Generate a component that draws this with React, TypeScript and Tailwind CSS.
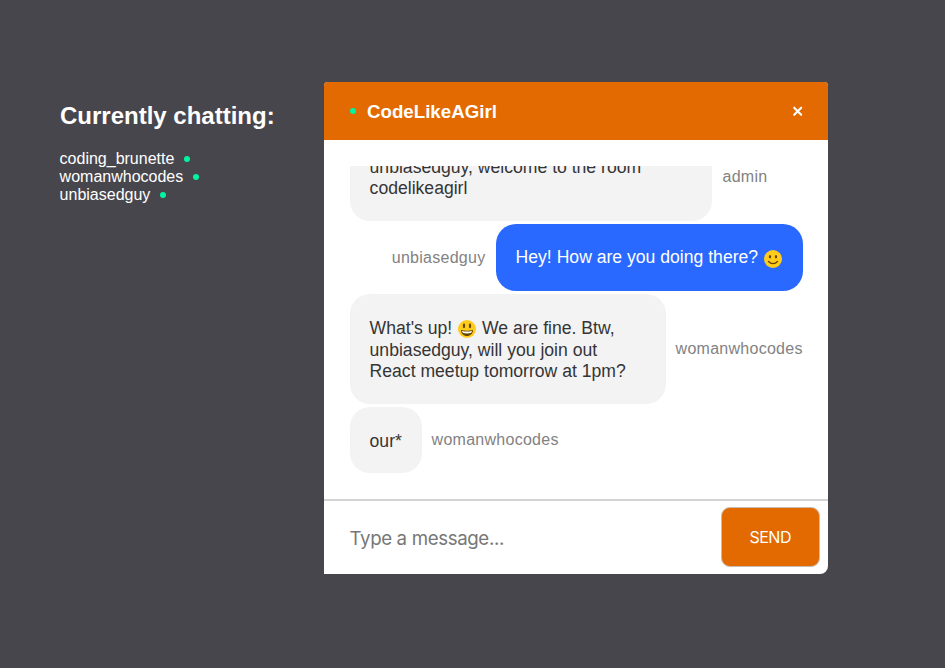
import type { ReactNode } from "react";

function Dot() {
  return <span className="block h-1.5 w-1.5 shrink-0 rounded-full bg-[#00f5a0]" />;
}

function Emoji({ open = false }: { open?: boolean }) {
  return (
    <svg
      className={`ml-px inline-block h-[18px] w-[18px] ${open ? "align-[-4px]" : "align-[-5px]"}`}
      viewBox="0 0 36 36"
    >
      <circle cx="18" cy="18" r="18" fill="#ffcc1b" />
      <ellipse cx="12" cy={open ? 11.5 : 13.5} rx="2.3" ry={open ? 5 : 3.6} fill="#664500" />
      <ellipse cx="24" cy={open ? 11.5 : 13.5} rx="2.3" ry={open ? 5 : 3.6} fill="#664500" />
      {open ? (
        <>
          <path d="M6 20C14 22 22 22 30 20C30 27 25 32 18 32S6 27 6 20Z" fill="#664500" />
          <path d="M8 22C15 23.5 21 23.5 28 22C28 25.5 24 27 18 27S8 25.5 8 22Z" fill="#fff" />
        </>
      ) : (
        <path d="M9 23C14 28.5 22 28.5 27 23" fill="none" stroke="#664500" strokeWidth="2.6" strokeLinecap="round" />
      )}
    </svg>
  );
}

function Sender({ children }: { children: ReactNode }) {
  return <span className="text-[16px] leading-[18px] tracking-[0.27px] text-[#828282]">{children}</span>;
}

const bubble = "shrink-0 whitespace-nowrap rounded-[20px] pl-[19.6px] text-[17.6px]";

export default function App() {
  return (
    <div className="flex h-[668px] w-[945px] items-start overflow-hidden bg-[#48464d] font-['Liberation_Sans',Arial,sans-serif]">
      <aside className="ml-[59.6px] mt-[102px] w-[264.4px] shrink-0 text-white">
        <h2 className="ml-[0.4px] whitespace-nowrap text-[24px] font-bold leading-[28px]">Currently chatting:</h2>
        <ul className="mt-[20px] text-[16px] leading-[18px]">
          {["coding_brunette", "womanwhocodes", "unbiasedguy"].map((name) => (
            <li key={name} className="flex items-center gap-[9.4px]">
              <span>{name}</span>
              <Dot />
            </li>
          ))}
        </ul>
      </aside>

      <main className="mt-[82px] flex h-[492px] w-[504px] shrink-0 flex-col overflow-hidden rounded-t-[4px] rounded-br-[8px] bg-white">
        <header className="flex h-[58px] shrink-0 items-center bg-[#e26a00] pl-[26px] pr-[25px] text-white">
          <Dot />
          <h1 className="ml-[11px] flex-1 pt-0.5 text-[18.72px] font-bold leading-[22px]">CodeLikeAGirl</h1>
          <button aria-label="Close" className="flex h-[11px] w-[11px] items-center justify-center">
            <svg className="h-[11px] w-[11px]" viewBox="0 0 11 11">
              <path d="M2.2 1.7L9.2 8.7M9.2 1.7L2.2 8.7" stroke="white" strokeWidth="2.1" strokeLinecap="round" />
            </svg>
          </button>
        </header>

        <section className="mx-[26px] mt-[26px] flex h-[307px] w-[453px] shrink-0 flex-col justify-end gap-[3px] overflow-hidden">
          <div className="flex h-[88px] shrink-0 items-center gap-[10.5px]">
            <div className={`${bubble} h-[88px] w-[362px] bg-[#f3f3f3] pt-[24px] leading-[21px] text-[#353535]`}>
              unbiasedguy, welcome to the room
              <br />
              codelikeagirl
            </div>
            <Sender>admin</Sender>
          </div>
          <div className="flex h-[67px] shrink-0 items-center justify-end gap-[10.5px]">
            <Sender>unbiasedguy</Sender>
            <div className={`${bubble} h-[67px] w-[307px] bg-[#2969ff] pt-[23px] leading-[21.5px] text-white`}>
              Hey! How are you doing there? <Emoji />
            </div>
          </div>
          <div className="flex h-[110px] shrink-0 items-center gap-[9.6px]">
            <div className={`${bubble} h-[110px] w-[316px] bg-[#f3f3f3] pt-[24px] leading-[21.5px] text-[#353535]`}>
              What's up! <Emoji open /> <span className="ml-px">We are fine. Btw,</span>
              <br />
              unbiasedguy, will you join out
              <br />
              React meetup tomorrow at 1pm?
            </div>
            <Sender>womanwhocodes</Sender>
          </div>
          <div className="flex h-[66px] shrink-0 items-center gap-[9.6px]">
            <div className={`${bubble} h-[66px] w-[72px] bg-[#f3f3f3] pt-[24px] leading-[21.5px] text-[#353535]`}>our*</div>
            <Sender>womanwhocodes</Sender>
          </div>
        </section>

        <form className="mt-[26px] flex h-[75px] shrink-0 items-start border-t-2 border-[#d3d3d3]">
          <input
            placeholder="Type a message..."
            className="h-[73px] w-[397px] bg-transparent pl-[25.5px] pt-0.5 font-['Inter',sans-serif] text-[18.7px] tracking-[-0.37px] outline-none placeholder:text-[#777]"
          />
          <button
            type="button"
            className="ml-[0.5px] mt-1.5 h-[60px] w-[99px] rounded-[9px] border border-[#c6bcb2] bg-[#e26a00] pr-[1.5px] font-['Inter',sans-serif] text-[16px] tracking-[-0.5px] text-white"
          >
            SEND
          </button>
        </form>
      </main>
    </div>
  );
}
